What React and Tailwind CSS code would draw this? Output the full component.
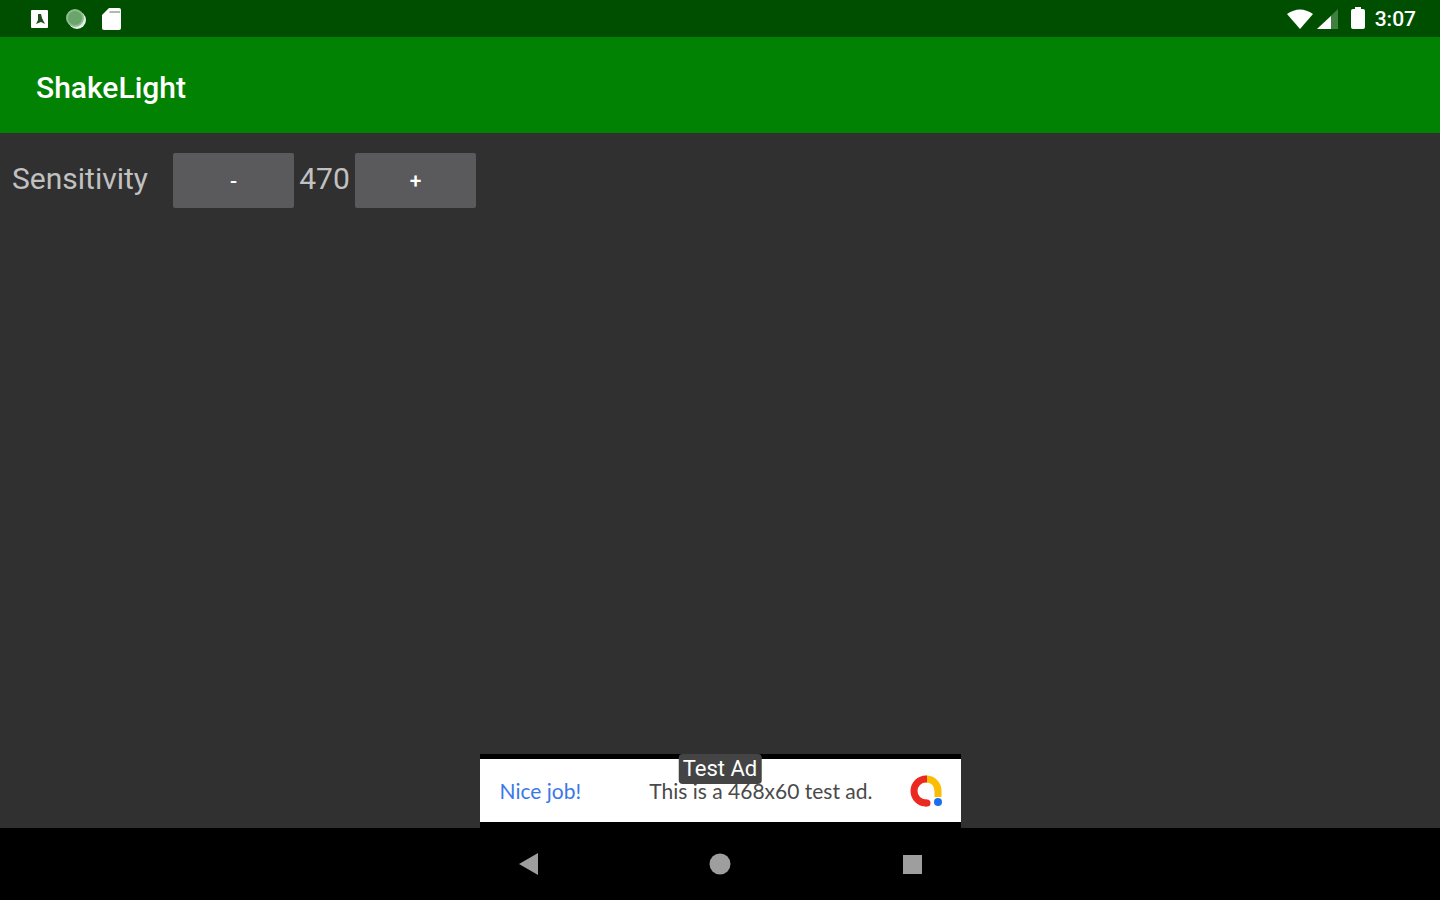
import { useState } from 'react';

const StatusBar = () => (
  <div className="flex h-[37px] items-center justify-between bg-[#004f00] pl-[30px] pr-6">
    <div className="flex items-center gap-[15px]">
      <svg width="20" height="24" viewBox="0 0 20 24" aria-hidden="true">
        <rect x="1" y="3" width="17" height="18" rx="1" fill="#fff" />
        <path d="M8 7h3l1 4 3 6-4-2-5 2 2-4z" fill="#1c4f1c" />
      </svg>
      <svg width="22" height="24" viewBox="0 0 22 24" aria-hidden="true">
        <circle cx="12" cy="13" r="9" fill="#e3f0e3" />
        <circle cx="10" cy="11" r="8" fill="#6aa66a" stroke="#8fbc8f" strokeWidth="2" />
      </svg>
      <svg width="20" height="24" viewBox="0 0 20 24" aria-hidden="true">
        <path d="M7 1h10q2 0 2 2v18q0 2-2 2H2q-2 0-2-2V8z" fill="#fff" />
        <path d="M8 4h10v2H7z" fill="#a9bda9" />
      </svg>
    </div>

    <div className="flex items-center">
      <svg width="27" height="24" viewBox="0 0 27 24" aria-hidden="true">
        <path d="M1 7Q14-2 27 7L14 22z" fill="#fff" />
      </svg>
      <svg className="ml-1" width="22" height="24" viewBox="0 0 22 24" aria-hidden="true">
        <path d="M0 22L21 2v20z" fill="#3f7f3f" />
        <path d="M0 22L14 9v13z" fill="#fff" />
      </svg>
      <svg className="ml-3" width="14" height="24" viewBox="0 0 14 24" aria-hidden="true">
        <path d="M4 0h6v2h2q2 0 2 2v16q0 2-2 2H2q-2 0-2-2V4q0-2 2-2h2z" fill="#fff" />
      </svg>
      <span className="ml-[10px] text-[21px] font-medium leading-6 text-white">3:07</span>
    </div>
  </div>
);

const StepButton = ({ label, onClick, children }) => (
  <button
    type="button"
    aria-label={label}
    onClick={onClick}
    className="h-[55px] w-[121px] rounded-xs bg-[#5a5a5c] pt-[2px] text-[21px] font-medium text-white"
  >
    {children}
  </button>
);

const AdBanner = () => (
  <a
    href="#ad"
    className="relative mx-auto block w-full max-w-[481px] bg-black pt-[5px] pb-[6px]"
  >
    <span className="flex h-[63px] items-center bg-white pl-5 pr-[18px] font-['Lato',sans-serif] text-[21px]">
      <span className="text-[#3b78e7]">Nice job!</span>
      <span className="ml-auto mr-9 text-[#4a4a4a]">This is a 468x60 test ad.</span>
      <svg width="34" height="34" viewBox="0 0 34 34" fill="none" aria-hidden="true">
        <path d="M17 5c7 0 12 5 12 12v6" stroke="#fbbc04" strokeWidth="7" />
        <path d="M18 5h-1a12 12 0 1 0 0 24h1" stroke="#ea2a20" strokeWidth="7" />
        <circle cx="18" cy="29" r="3.500" fill="#ea2a20" />
        <circle cx="29" cy="28" r="4" fill="#1a6fee" />
      </svg>
    </span>
    <span className="absolute left-1/2 top-0 -translate-x-1/2 rounded-sm bg-[#444] px-1 text-[22px] leading-[30px] whitespace-nowrap text-white">
      Test Ad
    </span>
  </a>
);

const NavigationBar = () => (
  <nav className="flex h-[72px] items-center justify-center bg-black">
    <button type="button" aria-label="Back" className="flex w-48 justify-center">
      <svg width="20" height="22" viewBox="0 0 20 22" aria-hidden="true">
        <path d="M1 11L20 0v22z" fill="#9e9e9e" />
      </svg>
    </button>
    <button type="button" aria-label="Home" className="flex w-48 justify-center">
      <svg width="22" height="22" viewBox="0 0 22 22" aria-hidden="true">
        <circle cx="11" cy="11" r="10.500" fill="#9e9e9e" />
      </svg>
    </button>
    <button type="button" aria-label="Overview" className="flex w-48 justify-center">
      <svg width="20" height="20" viewBox="0 0 20 20" aria-hidden="true">
        <rect width="19" height="19" x="1" y="1" fill="#9e9e9e" />
      </svg>
    </button>
  </nav>
);

const App = () => {
  const [sensitivity, setSensitivity] = useState(470);

  return (
    <div className="flex min-h-screen flex-col bg-[#303030] font-['Roboto',sans-serif]">
      <StatusBar />

      <header className="flex h-24 items-center bg-[#028202] px-9 pt-1">
        <h1 className="text-[30px] font-medium text-white">ShakeLight</h1>
      </header>

      <main className="flex flex-1 flex-col justify-between">
        <div className="flex items-start px-3 pt-5">
          <span className="w-[161px] text-[30px] leading-[52px] text-[#c1c1c1]">Sensitivity</span>
          <StepButton label="Decrease sensitivity" onClick={() => setSensitivity(prev => prev - 10)}>
            -
          </StepButton>
          <output className="w-[61px] text-center text-[30px] leading-[52px] text-[#c1c1c1]">
            {sensitivity}
          </output>
          <StepButton label="Increase sensitivity" onClick={() => setSensitivity(prev => prev + 10)}>
            +
          </StepButton>
        </div>

        <AdBanner />
      </main>

      <NavigationBar />
    </div>
  );
};

export default App;
